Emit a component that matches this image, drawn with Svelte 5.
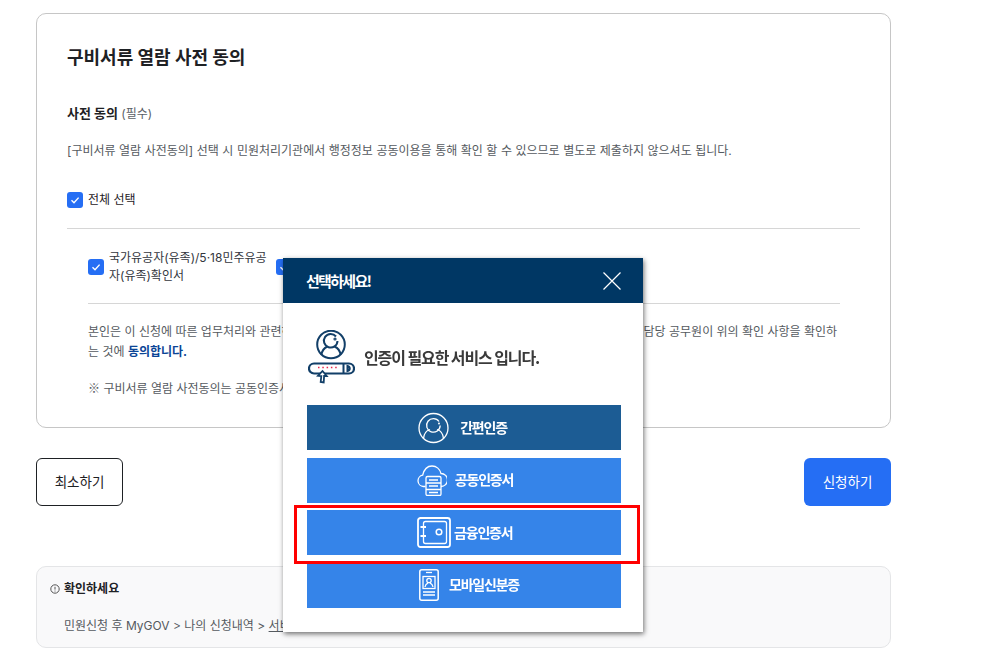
<script>
  const methods = [
    { id: 'simple', label: '간편인증', dark: true },
    { id: 'joint', label: '공동인증서' },
    { id: 'finance', label: '금융인증서' },
    { id: 'mobile', label: '모바일신분증' }
  ];
</script>

<div class="page">
  <section class="card">
    <h2>구비서류 열람 사전 동의</h2>
    <p class="field"><strong>사전 동의</strong> <span>(필수)</span></p>
    <p class="desc">[구비서류 열람 사전동의] 선택 시 민원처리기관에서 행정정보 공동이용을 통해 확인 할 수 있으므로 별도로 제출하지 않으셔도 됩니다.</p>

    <div class="check-all">
      <span class="check"><svg viewBox="0 0 16 16"><path d="M4.5 8.3 7 10.8 11.6 5.6" /></svg></span>
      <span>전체 선택</span>
    </div>

    <div class="agree">
      <div class="docs">
        <div class="doc">
          <span class="check"><svg viewBox="0 0 16 16"><path d="M4.5 8.3 7 10.8 11.6 5.6" /></svg></span>
          <span class="doc-label">국가유공자(유족)/5·18민주유공자(유족)확인서</span>
        </div>
        <div class="doc">
          <span class="check"><svg viewBox="0 0 16 16"><path d="M4.5 8.3 7 10.8 11.6 5.6" /></svg></span>
        </div>
      </div>
      <p class="terms">본인은 이 신청에 따른 업무처리와 관련하여 「전자정부법」제36조제1항에 따른 행정정보의 공동이용을 통하여 담당 공무원이 위의 확인 사항을 확인하는 것에 <b>동의합니다.</b></p>
      <p class="note"><span class="mark">※</span> 구비서류 열람 사전동의는 공동인증서 또는 간편인증 등 본인 확인 후 가능합니다.</p>
    </div>
  </section>

  <div class="actions">
    <button class="cancel">최소하기</button>
    <button class="submit">신청하기</button>
  </div>

  <section class="notice">
    <h3>
      <svg viewBox="0 0 10 10" width="10" height="10"><circle cx="5" cy="5" r="4.2" /><path d="M5 2.8v2.8M5 6.6v.9" /></svg>
      확인하세요
    </h3>
    <p>민원신청 후 MyGOV &gt; 나의 신청내역 &gt; <u>서비스 신청내역</u>에서 확인하실 수 있습니다.</p>
  </section>
</div>

<div class="modal">
  <header>
    <span>선택하세요!</span>
    <svg class="close" viewBox="0 0 18 18" width="18" height="18"><path d="M.5.5l17 17M17.5.5l-17 17" /></svg>
  </header>
  <div class="intro">
    <svg viewBox="0 0 47 54" width="47" height="54" class="intro-icon">
      <g fill="none" stroke="#123f68" stroke-width="2">
        <circle cx="23" cy="14.500" r="13.800" />
        <path d="M28 6.500a6.800 6.800 0 1 0 1.500 4.500" />
        <circle cx="27" cy="9" r=".6" />
        <path d="M13.500 25c.5-5 3.500-7.500 6-8.500M32.500 25c-.5-5-3.500-7.500-6-8.500" />
        <rect x="1" y="33.500" width="45" height="10" rx="5" stroke-width="2.200" />
        <path d="M35.500 33.500v10M39.500 36c3 .8 3 4.200 0 5z" />
        <path d="M14.500 41l4.200 5-2.600 0-.4 6.500-3-.5 .6-6-3.300-.2z" fill="#fff" stroke-width="1.800" />
      </g>
      <path d="M10 37.500h21" stroke="#e8274b" stroke-width="1.500" stroke-dasharray="1.500 2.800" fill="none" />
    </svg>
    <p>인증이 필요한 서비스 입니다.</p>
  </div>

  <div class="methods">
    {#each methods as m (m.id)}
      <button class="method {m.id}">
        {#if m.id === 'simple'}
          <svg viewBox="0 0 31 32" width="31" height="32">
            <circle cx="15.500" cy="16" r="14.500" />
            <path d="M21 9.500a6.800 6.800 0 1 0 1.200 4" />
            <circle cx="21" cy="11.500" r=".4" />
            <path d="M5.500 26.500c.5-5.500 3-8 6.500-9M25.500 26.500c-.5-5.500-3-8-6.500-9" />
          </svg>
        {:else if m.id === 'joint'}
          <svg viewBox="0 0 30 31" width="30" height="31">
            <path d="M8.500 21.500H6.500a5.700 5.700 0 0 1-.8-11.300C7 4.500 10.500 1 15 1c4.500 0 8 3.200 9 7.500a6.500 6.500 0 0 1 0 13" />
            <rect x="9" y="11.500" width="15" height="19" rx="1.500" />
            <path d="M9 18h15M9 24.500h15M12 15h9M12 21h9M12 27.500h9" />
          </svg>
        {:else if m.id === 'finance'}
          <svg viewBox="0 0 34 31" width="34" height="31">
            <rect x="1" y="1" width="32" height="29" rx="2.500" stroke-width="1.800" />
            <rect x="6.500" y="4.500" width="23" height="22" rx="2" />
            <circle cx="22" cy="15" r="2.800" stroke-width="1.500" />
            <path d="M3.500 10H9M3.500 19H9" stroke-width="1.800" />
          </svg>
        {:else}
          <svg viewBox="0 0 20 32" width="20" height="32">
            <rect x=".8" y=".8" width="18.400" height="30.400" rx="2" stroke-width="1.500" />
            <path d="M7 3.500h6" />
            <rect x="4" y="7.500" width="12" height="12" />
            <circle cx="10" cy="11.500" r="2.200" />
            <path d="M6 18c.5-3 2-3.500 3-4M14 18c-.5-3-2-3.500-3-4M4 23h12M4 26h12" />
          </svg>
        {/if}
        <span>{m.label}</span>
      </button>
    {/each}
  </div>
  <div class="highlight"></div>
</div>

<style>
  :global(body) {
    margin: 0;
    background: #fff;
    font-family: Inter, "Noto Sans CJK KR", sans-serif;
    color: #1e2124;
    overflow: hidden;
  }

  .page {
    width: 855px;
    margin-left: 36px;
    padding-top: 13px;
  }

  /* card */
  .card {
    box-sizing: border-box;
    height: 415px;
    border: 1px solid #c6c6c6;
    border-radius: 10px;
    padding: 30px;
  }

  h2 {
    margin: 0;
    font-size: 18px;
    line-height: 28px;
    font-weight: 700;
    color: #1e2124;
  }

  .field {
    margin: 29px 0 0;
    font-size: 12px;
    line-height: 24px;
    color: #5a5f66;
  }

  .field strong {
    font-size: 13px;
    color: #1e2124;
    font-weight: 700;
  }

  .desc {
    margin: 15px 0 0;
    font-size: 12px;
    line-height: 20px;
    color: #555a60;
    word-spacing: 0.15px;
    white-space: nowrap;
  }

  .check-all {
    display: flex;
    align-items: center;
    gap: 5px;
    margin-top: 29px;
    padding-bottom: 18px;
    font-size: 12px;
    line-height: 20px;
    border-bottom: 1px solid #d6d6d6;
  }

  .check {
    flex: none;
    width: 16px;
    height: 16px;
    border-radius: 3px;
    background: #256ef4;
    display: block;
  }

  .check svg {
    display: block;
    fill: none;
    stroke: #fff;
    stroke-width: 1.400;
  }

  .agree {
    padding: 20px 20px 0 21px;
  }

  .docs {
    display: flex;
    gap: 8px;
    padding-bottom: 18px;
    border-bottom: 1px solid #d6d6d6;
  }

  .doc {
    display: flex;
    align-items: center;
    gap: 5px;
    width: 180px;
  }

  .doc-label {
    font-size: 12px;
    line-height: 18px;
    color: #33363d;
  }

  .terms {
    margin: 18px 0 0;
    font-size: 12px;
    line-height: 20px;
    color: #555a60;
    word-break: break-all;
  }

  .terms b {
    color: #0b4596;
    font-weight: 700;
  }

  .note {
    margin: 16px 0 0;
    font-size: 12px;
    line-height: 20px;
    color: #555a60;
    white-space: nowrap;
  }

  .mark {
    font-family: "Noto Sans CJK KR", sans-serif;
  }

  /* actions */
  .actions {
    display: flex;
    justify-content: space-between;
    margin-top: 30px;
  }

  .actions button {
    width: 87px;
    height: 48px;
    padding: 0 0 2px;
    border-radius: 6px;
    font: 13.500px Inter, "Noto Sans CJK KR", sans-serif;
  }

  .cancel {
    background: #fff;
    border: 1px solid #1e2124;
    color: #1e2124;
  }

  .submit {
    background: #256ef4;
    border: 0;
    color: #fff;
  }

  /* notice */
  .notice {
    box-sizing: border-box;
    height: 82px;
    margin-top: 60px;
    padding: 12px 27px;
    background: #f9f9fa;
    border: 1px solid #e4e5e7;
    border-radius: 10px;
  }

  .notice h3 {
    position: relative;
    margin: 0;
    font-size: 12px;
    line-height: 20px;
    font-weight: 700;
    color: #1e2124;
  }

  .notice h3 svg {
    position: absolute;
    left: -14px;
    top: 5px;
    fill: none;
    stroke: #555;
    stroke-width: 1;
  }

  .notice p {
    margin: 17px 0 0;
    font-size: 12px;
    line-height: 20px;
    color: #555a60;
    white-space: nowrap;
  }

  /* modal */
  .modal {
    position: fixed;
    left: 283px;
    top: 258px;
    width: 360px;
    height: 374px;
    background: #fff;
    box-shadow: 1px 2px 5px rgba(0, 0, 0, 0.55);
    font-family: "Noto Sans CJK KR", sans-serif;
  }

  .modal header {
    height: 45px;
    background: #003764;
    display: flex;
    align-items: center;
    justify-content: space-between;
    padding: 0 22px 0 23px;
    color: #fff;
    font-size: 15px;
    font-weight: 700;
    letter-spacing: -1.700px;
  }

  .close {
    fill: none;
    stroke: #fff;
    stroke-width: 1.200;
  }

  .intro {
    display: flex;
    align-items: center;
    gap: 9px;
    margin: 27px 0 0 25px;
    height: 54px;
  }

  .intro-icon {
    flex: none;
  }

  .intro p {
    margin: 0;
    font-size: 16px;
    font-weight: 700;
    letter-spacing: -1.100px;
    color: #3a3a3a;
  }

  .methods {
    display: flex;
    flex-direction: column;
    gap: 7.670px;
    margin: 21px 22px 0 24px;
  }

  .method {
    height: 45px;
    border: 0;
    padding: 0;
    background: #3584e9;
    color: #fff;
    display: flex;
    align-items: center;
    justify-content: center;
    font: 700 14px "Noto Sans CJK KR", sans-serif;
    letter-spacing: -1.200px;
  }

  .method span {
    margin-top: -2px;
  }

  .method svg {
    fill: none;
    stroke: #fff;
    stroke-width: 1.300;
    flex: none;
  }

  .simple {
    background: #1c5c94;
    gap: 11px;
    padding-right: 3px;
  }

  .joint {
    gap: 8px;
    padding-left: 2px;
  }

  .finance {
    gap: 3.500px;
    padding-left: 1px;
  }

  .mobile {
    gap: 10px;
    padding-left: 10px;
  }

  .highlight {
    position: absolute;
    left: 11px;
    top: 247px;
    width: 346px;
    height: 59px;
    box-sizing: border-box;
    border: 3px solid #f00;
    pointer-events: none;
  }
</style>
